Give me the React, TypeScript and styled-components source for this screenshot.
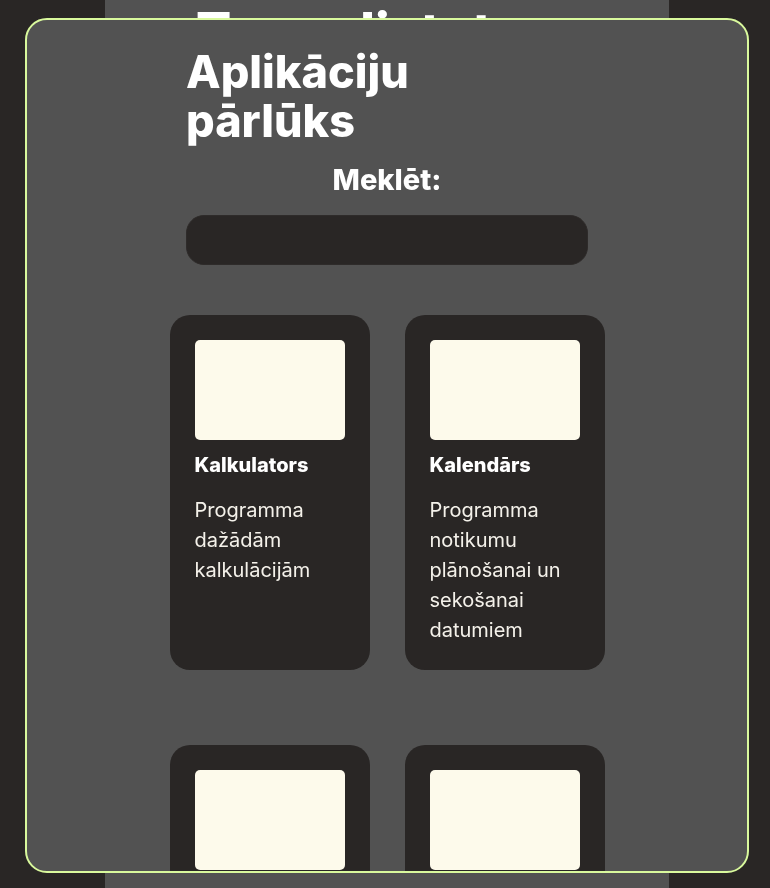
import * as React from 'react'
import styled, { createGlobalStyle } from 'styled-components'

const GlobalStyle = createGlobalStyle`
  html, body {
    margin: 0;
    padding: 0;
    background: #292625;
    font-family: Inter, "Noto Sans", sans-serif;
    color: #ffffff;
  }
`

const apps = [
  { id: 1, title: 'Kalkulators', text: 'Programma dažādām kalkulācijām' },
  { id: 2, title: 'Kalendārs', text: 'Programma notikumu plānošanai un sekošanai datumiem' },
  { id: 3, title: 'Piezīmes', text: 'Programma īsu piezīmju pierakstīšanai' },
  { id: 4, title: 'Laikapstākļi', text: 'Programma laika prognozes apskatei' }
]

// Page behind the dialog
const Page = styled.main`
  width: 564px;
  min-height: 100vh;
  margin: 0 0 0 105px;
  background: #525252;
  padding: 1px 0 0 91px;
  box-sizing: border-box;
`

const PageTitle = styled.h1`
  margin: 0;
  font-size: 52px;
  font-weight: 800;
  line-height: 1.21;
  white-space: nowrap;
`

// Dialog
const Dialog = styled.section`
  position: fixed;
  top: 18px;
  left: 25px;
  width: 724px;
  height: 855px;
  box-sizing: border-box;
  border: 2px solid #d9f99d;
  border-radius: 22px;
  background: #525252;
  overflow: hidden;
`

const DialogBody = styled.div`
  display: flex;
  flex-direction: column;
  align-items: center;
  padding-top: 27px;
`

const Header = styled.div`
  width: 402px;
  display: flex;
  flex-direction: column;
`

const Title = styled.h2`
  margin: 0;
  width: 300px;
  font-size: 45px;
  font-weight: 800;
  line-height: 49px;
`

const SearchLabel = styled.label`
  margin-top: 17px;
  align-self: center;
  font-size: 29px;
  font-weight: 800;
  line-height: 35px;
`

const SearchInput = styled.input`
  margin-top: 18px;
  height: 50px;
  box-sizing: border-box;
  border: 1px solid #2e2b2a;
  border-radius: 18px;
  background: #292625;
  color: #ffffff;
  font: 18px Inter, sans-serif;
  padding: 0 18px;
  outline: none;
`

const Grid = styled.div`
  margin-top: 50px;
  display: grid;
  grid-template-columns: repeat(2, 200px);
  column-gap: 35px;
  row-gap: 75px;
`

const Card = styled.article`
  display: flex;
  flex-direction: column;
  padding: 25px;
  border-radius: 20px;
  background: #292625;
`

const Thumb = styled.div`
  width: 150px;
  height: 100px;
  border-radius: 5px;
  background: #fdfaeb;
`

const CardTitle = styled.h3`
  margin: 14px 0 0;
  font-size: 20px;
  font-weight: 800;
  line-height: 22px;
`

const CardText = styled.p`
  margin: 19px 0 0;
  font-size: 20px;
  line-height: 30px;
  color: #f4f1ea;
`

const App: React.FC = () => {
  return (
    <>
      <GlobalStyle />
      <Page>
        <PageTitle>Tavas lietotnes</PageTitle>
      </Page>

      <Dialog>
        <DialogBody>
          <Header>
            <Title>Aplikāciju pārlūks</Title>
            <SearchLabel htmlFor="search">Meklēt:</SearchLabel>
            <SearchInput id="search" type="text" />
          </Header>

          <Grid>
            {apps.map(app => (
              <Card key={app.id}>
                <Thumb />
                <CardTitle>{app.title}</CardTitle>
                <CardText>{app.text}</CardText>
              </Card>
            ))}
          </Grid>
        </DialogBody>
      </Dialog>
    </>
  )
}

export default App
